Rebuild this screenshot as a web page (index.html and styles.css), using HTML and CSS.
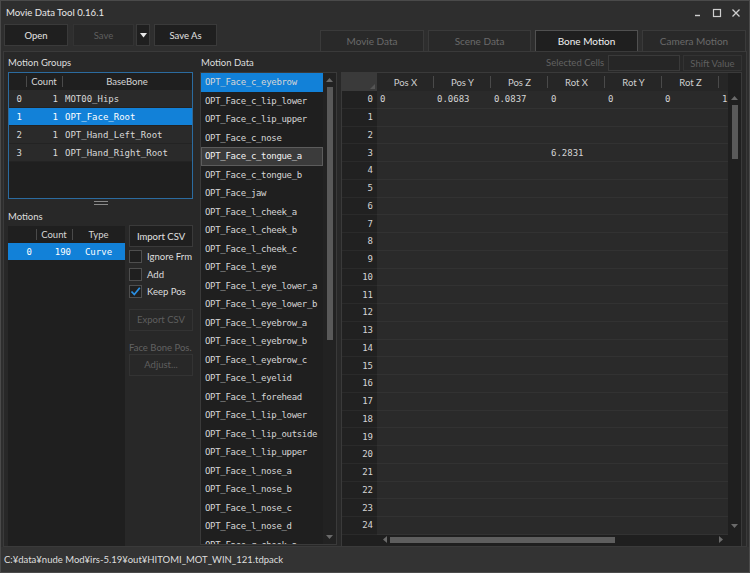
FILE: index.html
```html
<!DOCTYPE html>
<html>
<head>
  <link rel="stylesheet" href="styles.css">
</head>
<body>
<div class="window">
  <div class="titlebar">
    <span class="title">Movie Data Tool 0.16.1</span>
    <div class="winctl">
      <svg width="10" height="10" viewBox="0 0 10 10"><path d="M2 7.5h5" stroke="#cfcfcf" stroke-width="1.4"/></svg>
      <svg width="10" height="10" viewBox="0 0 10 10"><rect x="1.5" y="1.5" width="7" height="7" fill="none" stroke="#cfcfcf" stroke-width="1.2"/></svg>
      <svg width="10" height="10" viewBox="0 0 10 10"><path d="M1.5 1.5l7 7M8.5 1.5l-7 7" stroke="#cfcfcf" stroke-width="1.3"/></svg>
    </div>
  </div>

  <div class="toolbar">
    <div class="tools">
      <button class="btn btn-open">Open</button>
      <button class="btn btn-save" disabled>Save</button>
      <button class="btn btn-drop"><svg width="7" height="5" viewBox="0 0 7 5"><path d="M0 0h7L3.5 4.5z" fill="#e8e8e8"/></svg></button>
      <button class="btn btn-saveas">Save As</button>
    </div>
    <div class="tabs">
      <div class="tab">Movie Data</div>
      <div class="tab tab-s">Scene Data</div>
      <div class="tab tab-s on">Bone Motion</div>
      <div class="tab">Camera Motion</div>
    </div>
  </div>

  <div class="main">
    <!-- left: groups + motions -->
    <div class="left">
      <div class="label">Motion Groups</div>
      <div class="gtbl">
        <div class="gth">
          <span class="g-idx"></span>
          <span class="g-cnt hsep">Count</span>
          <span class="g-bone hsep">BaseBone</span>
        </div>
        <div class="gtr"><span class="g-idx">0</span><span class="g-cnt">1</span><span class="g-bone">MOT00_Hips</span></div>
        <div class="gtr sel"><span class="g-idx">1</span><span class="g-cnt">1</span><span class="g-bone">OPT_Face_Root</span></div>
        <div class="gtr"><span class="g-idx">2</span><span class="g-cnt">1</span><span class="g-bone">OPT_Hand_Left_Root</span></div>
        <div class="gtr"><span class="g-idx">3</span><span class="g-cnt">1</span><span class="g-bone">OPT_Hand_Right_Root</span></div>
      </div>
      <div class="split"><div class="grip"></div></div>
      <div class="label label-m">Motions</div>
      <div class="motions">
        <div class="mtbl">
          <div class="mth">
            <span class="m-idx"></span>
            <span class="m-cnt hsep">Count</span>
            <span class="m-type hsep">Type</span>
          </div>
          <div class="mtr sel"><span class="m-idx">0</span><span class="m-cnt">190</span><span class="m-type">Curve</span></div>
        </div>
        <div class="mbtns">
          <button class="btn btn-side">Import CSV</button>
          <div class="cbrows">
            <div class="cb"><span class="box"></span>Ignore Frm</div>
            <div class="cb"><span class="box"></span>Add</div>
            <div class="cb"><span class="box"><svg width="11" height="11" viewBox="0 0 11 11"><path d="M1.5 5.5l2.8 3L9.8 1.8" fill="none" stroke="#2a90e4" stroke-width="1.8"/></svg></span>Keep Pos</div>
          </div>
          <button class="btn btn-side btn-exp" disabled>Export CSV</button>
          <div class="dlabel">Face Bone Pos.</div>
          <button class="btn btn-side" disabled>Adjust...</button>
        </div>
      </div>
    </div>

    <!-- middle: motion data list -->
    <div class="mdata">
      <div class="label label-d">Motion Data</div>
      <div class="list">
        <div class="items">
          <div class="it sel">OPT_Face_c_eyebrow</div>
          <div class="it">OPT_Face_c_lip_lower</div>
          <div class="it">OPT_Face_c_lip_upper</div>
          <div class="it">OPT_Face_c_nose</div>
          <div class="it focus">OPT_Face_c_tongue_a</div>
          <div class="it">OPT_Face_c_tongue_b</div>
          <div class="it">OPT_Face_jaw</div>
          <div class="it">OPT_Face_l_cheek_a</div>
          <div class="it">OPT_Face_l_cheek_b</div>
          <div class="it">OPT_Face_l_cheek_c</div>
          <div class="it">OPT_Face_l_eye</div>
          <div class="it">OPT_Face_l_eye_lower_a</div>
          <div class="it">OPT_Face_l_eye_lower_b</div>
          <div class="it">OPT_Face_l_eyebrow_a</div>
          <div class="it">OPT_Face_l_eyebrow_b</div>
          <div class="it">OPT_Face_l_eyebrow_c</div>
          <div class="it">OPT_Face_l_eyelid</div>
          <div class="it">OPT_Face_l_forehead</div>
          <div class="it">OPT_Face_l_lip_lower</div>
          <div class="it">OPT_Face_l_lip_outside</div>
          <div class="it">OPT_Face_l_lip_upper</div>
          <div class="it">OPT_Face_l_nose_a</div>
          <div class="it">OPT_Face_l_nose_b</div>
          <div class="it">OPT_Face_l_nose_c</div>
          <div class="it">OPT_Face_l_nose_d</div>
          <div class="it">OPT_Face_r_cheek_a</div>
        </div>
        <div class="vscroll vscroll-list">
          <svg class="arr" width="7" height="4" viewBox="0 0 7 4"><path d="M0 4h7L3.5 0z" fill="#6a6a6a"/></svg>
          <div class="thumb thumb-list"></div>
          <div class="fill"></div>
          <svg class="arr" width="7" height="4" viewBox="0 0 7 4"><path d="M0 0h7L3.5 4z" fill="#6a6a6a"/></svg>
        </div>
      </div>
    </div>

    <!-- right: value grid -->
    <div class="gridcol">
      <div class="gtop">
        <span class="dlabel">Selected Cells</span>
        <span class="tbox"></span>
        <button class="btn btn-shift" disabled>Shift Value</button>
      </div>
      <div class="grid">
        <div class="gmain">
          <div class="gtable">
            <div class="ghead">
              <span class="corner"><svg width="5" height="5" viewBox="0 0 5 5"><path d="M5 0v5H0z" fill="#555"/></svg></span>
              <span class="hc">Pos X</span>
              <span class="hc">Pos Y</span>
              <span class="hc">Pos Z</span>
              <span class="hc">Rot X</span>
              <span class="hc">Rot Y</span>
              <span class="hc">Rot Z</span>
              <span class="hc hc-last"></span>
            </div>
            <div class="gr"><span class="rh">0</span><span class="cells"><span class="c">0</span><span class="c">0.0683</span><span class="c">0.0837</span><span class="c">0</span><span class="c">0</span><span class="c">0</span><span class="c c-last">1</span></span></div>
            <div class="gr"><span class="rh">1</span><span class="cells"></span></div>
            <div class="gr"><span class="rh">2</span><span class="cells"></span></div>
            <div class="gr"><span class="rh">3</span><span class="cells"><span class="c"></span><span class="c"></span><span class="c"></span><span class="c">6.2831</span></span></div>
            <div class="gr"><span class="rh">4</span><span class="cells"></span></div>
            <div class="gr"><span class="rh">5</span><span class="cells"></span></div>
            <div class="gr"><span class="rh">6</span><span class="cells"></span></div>
            <div class="gr"><span class="rh">7</span><span class="cells"></span></div>
            <div class="gr"><span class="rh">8</span><span class="cells"></span></div>
            <div class="gr"><span class="rh">9</span><span class="cells"></span></div>
            <div class="gr"><span class="rh">10</span><span class="cells"></span></div>
            <div class="gr"><span class="rh">11</span><span class="cells"></span></div>
            <div class="gr"><span class="rh">12</span><span class="cells"></span></div>
            <div class="gr"><span class="rh">13</span><span class="cells"></span></div>
            <div class="gr"><span class="rh">14</span><span class="cells"></span></div>
            <div class="gr"><span class="rh">15</span><span class="cells"></span></div>
            <div class="gr"><span class="rh">16</span><span class="cells"></span></div>
            <div class="gr"><span class="rh">17</span><span class="cells"></span></div>
            <div class="gr"><span class="rh">18</span><span class="cells"></span></div>
            <div class="gr"><span class="rh">19</span><span class="cells"></span></div>
            <div class="gr"><span class="rh">20</span><span class="cells"></span></div>
            <div class="gr"><span class="rh">21</span><span class="cells"></span></div>
            <div class="gr"><span class="rh">22</span><span class="cells"></span></div>
            <div class="gr"><span class="rh">23</span><span class="cells"></span></div>
            <div class="gr"><span class="rh">24</span><span class="cells"></span></div>
          </div>
          <div class="vscroll vscroll-grid">
            <svg class="arr" width="7" height="4" viewBox="0 0 7 4"><path d="M0 4h7L3.5 0z" fill="#6a6a6a"/></svg>
            <div class="thumb thumb-grid"></div>
            <div class="fill"></div>
            <svg class="arr" width="7" height="4" viewBox="0 0 7 4"><path d="M0 0h7L3.5 4z" fill="#6a6a6a"/></svg>
          </div>
        </div>
        <div class="hscroll">
          <svg width="4" height="7" viewBox="0 0 4 7"><path d="M4 0v7L0 3.5z" fill="#6a6a6a"/></svg>
          <div class="hthumb"></div>
          <div class="fill"></div>
          <svg width="4" height="7" viewBox="0 0 4 7"><path d="M0 0v7L4 3.5z" fill="#6a6a6a"/></svg>
        </div>
      </div>
    </div>
  </div>

  <div class="status">C:¥data¥nude Mod¥irs-5.19¥out¥HITOMI_MOT_WIN_121.tdpack</div>
</div>
</body>
</html>
```

FILE: styles.css
```css
/* dark tool window */
* {
  box-sizing: border-box;
}

body {
  margin: 0;
  background: #2d2d2d;
  font-family: Lato, "Noto Sans", sans-serif;
  font-size: 9.5px;
  color: #dcdcdc;
}

.window {
  width: 750px;
  height: 573px;
  border: 1px solid #4a4a4a;
  background: #2e2e2e;
  display: flex;
  flex-direction: column;
  overflow: hidden;
}

/* title bar */
.titlebar {
  height: 23px;
  flex: none;
  display: flex;
  align-items: center;
  justify-content: space-between;
  padding-left: 5px;
  font-size: 9.6px;
  color: #e8e8e8;
}

.winctl {
  display: flex;
  gap: 9px;
  padding-right: 8px;
}

.winctl svg {
  display: block;
}

/* toolbar + tabs */
.toolbar {
  height: 27px;
  flex: none;
  display: flex;
  justify-content: space-between;
  padding: 0 3px 0 3px;
}

.tools {
  display: flex;
}

.btn {
  height: 22px;
  padding: 0;
  background: #1f1f1f;
  border: 1px solid #3a3a3a;
  color: #e2e2e2;
  font: inherit;
  white-space: nowrap;
}

.btn:disabled {
  background: #282828;
  border-color: #333;
  color: #5f5f5f;
}

.btn-open {
  width: 64px;
}

.btn-save {
  width: 61px;
  margin-left: 5px;
}

.btn-drop {
  width: 14px;
  margin-left: 2px;
  display: flex;
  align-items: center;
  justify-content: center;
}

.btn-saveas {
  width: 63px;
  margin-left: 4px;
}

.tabs {
  display: flex;
  gap: 4px;
  align-self: flex-end;
}

.tab {
  width: 104px;
  height: 21px;
  border: 1px solid #3a3a3a;
  border-bottom: none;
  background: #292929;
  color: #6a6a6a;
  display: flex;
  align-items: center;
  justify-content: center;
  font-size: 10px;
}

.tab-s {
  width: 103px;
}

.tab.on {
  background: #1f1f1f;
  border-color: #505050;
  color: #f2f2f2;
}

/* main panel */
.main {
  height: 496px;
  flex: none;
  margin: 0 2px;
  padding: 0 4px;
  border: 1px solid #3a3a3a;
  background: #282828;
  display: flex;
}

.label {
  height: 20px;
  flex: none;
  display: flex;
  align-items: center;
  color: #dedede;
}

.left {
  width: 185px;
  display: flex;
  flex-direction: column;
}

/* motion groups table */
.gtbl {
  height: 127px;
  flex: none;
  border: 1px solid #2b6b9f;
  background: #1f1f1f;
}

.gth,
.mth {
  height: 17px;
  display: flex;
  align-items: center;
  color: #d6d6d6;
}

.hsep {
  background: linear-gradient(#4a4a4a, #4a4a4a) left center / 1px 11px no-repeat;
  text-align: center;
}

.gtr,
.mtr {
  display: flex;
  align-items: center;
  font-family: "DejaVu Sans Mono", "Liberation Mono", monospace;
  font-size: 9px;
  color: #d8d8d8;
}

.gtr {
  height: 18px;
  background: #2a2a2a;
  border-bottom: 1px solid #232323;
}

.sel {
  background: #1281d8;
  color: #fff;
}

.gtr.sel {
  background: #1281d8;
}

.g-idx {
  width: 17px;
  text-align: right;
  padding-right: 4px;
}

.g-cnt {
  width: 36px;
}

.gtr .g-cnt {
  text-align: right;
  padding-right: 4px;
}

.g-bone {
  flex: 1;
}

.gtr .g-bone {
  padding-left: 3px;
}

.split {
  height: 8px;
  flex: none;
  display: flex;
  align-items: center;
  justify-content: center;
}

.grip {
  width: 14px;
  height: 4px;
  border-top: 1px solid #8a8a8a;
  border-bottom: 1px solid #8a8a8a;
}

.label-m {
  height: 18px;
}

/* motions */
.motions {
  flex: 1;
  display: flex;
  gap: 4px;
}

.mtbl {
  width: 117px;
  margin-top: 1px;
  background: #1f1f1f;
}

.mtr {
  height: 17px;
}

.m-idx {
  width: 28px;
  text-align: right;
  padding-right: 4px;
}

.m-cnt {
  width: 36px;
}

.mtr .m-cnt {
  text-align: right;
  padding-right: 1px;
}

.m-type {
  flex: 1;
  text-align: center;
}

.mbtns {
  width: 64px;
  display: flex;
  flex-direction: column;
}

.btn-side {
  width: 64px;
  height: 22px;
  flex: none;
}

.cbrows {
  margin-top: 1px;
}

.cb {
  height: 17.5px;
  display: flex;
  align-items: center;
  gap: 5px;
  white-space: nowrap;
  color: #dedede;
}

.box {
  width: 13px;
  height: 13px;
  flex: none;
  border: 1px solid #4e4e4e;
  background: #1f1f1f;
  display: flex;
  align-items: center;
  justify-content: center;
}

.btn-exp {
  margin-top: 8px;
}

.dlabel {
  color: #626262;
  white-space: nowrap;
}

.mbtns .dlabel {
  height: 13px;
  margin-top: 10px;
  line-height: 13px;
}

/* motion data list */
.mdata {
  width: 137px;
  margin-left: 7px;
  display: flex;
  flex-direction: column;
}

.label-d {
  padding-left: 1px;
}

.list {
  flex: 1;
  margin-bottom: 1px;
  border: 1px solid #3a3a3a;
  background: #1f1f1f;
  display: flex;
  overflow: hidden;
}

.items {
  flex: 1;
  overflow: hidden;
}

.it {
  height: 18.5px;
  padding-left: 4px;
  display: flex;
  align-items: center;
  white-space: nowrap;
  font-family: "DejaVu Sans Mono", "Liberation Mono", monospace;
  font-size: 9px;
  letter-spacing: -0.32px;
  color: #d6d6d6;
}

.it.focus {
  background: #3b3b3b;
  box-shadow: inset 0 0 0 1px #5c5c5c;
  color: #f2f2f2;
}

.vscroll {
  width: 13px;
  display: flex;
  flex-direction: column;
  align-items: center;
  background: #222;
}

.vscroll .arr {
  flex: none;
}

.vscroll-list {
  padding: 5px 0 5px;
}

.thumb {
  width: 6px;
  flex: none;
  background: #595959;
}

.thumb-list {
  height: 253px;
  margin-top: 5px;
}

.fill {
  flex: 1;
}

/* value grid */
.gridcol {
  width: 401px;
  margin-left: 4px;
  display: flex;
  flex-direction: column;
}

.gtop {
  height: 20px;
  flex: none;
  display: flex;
  justify-content: flex-end;
  align-items: flex-start;
  padding-top: 3px;
}

.gtop .dlabel {
  height: 16px;
  line-height: 16px;
  margin-right: 4px;
}

.tbox {
  width: 72px;
  height: 16px;
  border: 1px solid #3a3a3a;
  background: #262626;
}

.btn-shift {
  width: 59px;
  height: 16px;
  margin-left: 3px;
}

.grid {
  flex: 1;
  margin-bottom: 1px;
  border: 1px solid #3a3a3a;
  background: #1f1f1f;
  display: flex;
  flex-direction: column;
}

.gmain {
  flex: 1;
  display: flex;
}

.gtable {
  width: 386px;
}

.ghead {
  height: 18px;
  display: flex;
  background: #262626;
  color: #d0d0d0;
}

.corner {
  width: 35px;
  background: #3a3a3a;
  display: flex;
  align-items: flex-end;
  justify-content: flex-end;
  padding: 0 2px 2px 0;
}

.corner svg {
  display: block;
}

.hc {
  width: 57px;
  display: flex;
  align-items: center;
  justify-content: center;
  background: linear-gradient(#4a4a4a, #4a4a4a) right center / 1px 12px no-repeat;
}

.hc-last {
  width: 9px;
  background: none;
}

.gr {
  height: 17.75px;
  display: flex;
  font-family: "DejaVu Sans Mono", "Liberation Mono", monospace;
  font-size: 9px;
  color: #d4d4d4;
}

.rh {
  width: 35px;
  flex: none;
  padding-right: 4px;
  text-align: right;
  background: #212121;
  border-bottom: 1px solid #2a2a2a;
  display: flex;
  align-items: center;
  justify-content: flex-end;
}

.cells {
  flex: 1;
  display: flex;
  background: #2a2a2a;
  border-bottom: 1px solid #323232;
}

.c {
  width: 57px;
  flex: none;
  padding-left: 3px;
  display: flex;
  align-items: center;
}

.c-last {
  width: 9px;
  padding-left: 3px;
}

.vscroll-grid {
  margin-top: 18px;
  padding: 5px 0 7px;
  background: #1f1f1f;
}

.thumb-grid {
  height: 54px;
  margin-top: 5px;
}

.hscroll {
  height: 10px;
  margin: 0 14px 1px 36px;
  display: flex;
  align-items: center;
  padding: 0 4px 0 5px;
}

.hscroll svg {
  display: block;
  flex: none;
}

.hthumb {
  width: 225px;
  height: 6px;
  margin-left: 3px;
  background: #5e5e5e;
}

/* status bar */
.status {
  flex: 1;
  display: flex;
  align-items: center;
  padding-left: 3px;
  background: #333;
  color: #dedede;
  font-size: 9.5px;
}
```
